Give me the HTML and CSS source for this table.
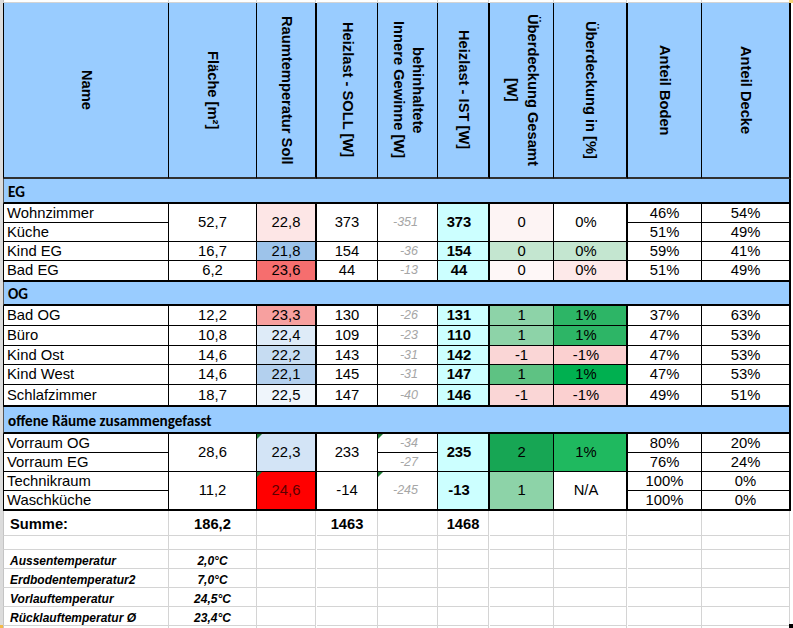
FILE: index.html
```html
<!DOCTYPE html>
<html lang="de">
<head>
<meta charset="utf-8">
<title>Heizlast</title>
<link rel="stylesheet" href="styles.css">
</head>
<body>
<div class="page">
  <div class="rowhead"></div>
  <div class="sheet">
    <!-- top strip (previous row) -->
    <div class="x x1"></div><div class="x"></div><div class="x xw"></div><div class="x"></div><div class="x"></div><div class="x xw"></div><div class="x"></div><div class="x xw"></div><div class="x"></div><div class="x xw"></div>

    <!-- header -->
    <div class="c h n"><span class="v">Name</span></div>
    <div class="c h f"><span class="v">Fläche [m²]</span></div>
    <div class="c h t"><span class="v">Raumtemperatur Soll</span></div>
    <div class="c h s"><span class="v">Heizlast - SOLL [W]</span></div>
    <div class="c h g"><span class="v">behinhaltete<br>Innere Gewinne [W]</span></div>
    <div class="c h i"><span class="v">Heizlast - IST [W]</span></div>
    <div class="c h u"><span class="v v2">Überdeckung Gesamt<br>[W]</span></div>
    <div class="c h p"><span class="v">Überdeckung in [%]</span></div>
    <div class="c h b"><span class="v">Anteil Boden</span></div>
    <div class="c h d"><span class="v">Anteil Decke</span></div>

    <div class="band">EG</div>

    <div class="c n">Wohnzimmer</div>
    <div class="c f r2">52,7</div>
    <div class="c t r2 bg-t1">22,8</div>
    <div class="c s r2">373</div>
    <div class="c g r2">-351</div>
    <div class="c i r2">373</div>
    <div class="c u r2 bg-u0a">0</div>
    <div class="c p r2">0%</div>
    <div class="c b">46%</div>
    <div class="c d">54%</div>

    <div class="c n">Küche</div>
    <div class="c b">51%</div>
    <div class="c d">49%</div>

    <div class="c n">Kind EG</div>
    <div class="c f">16,7</div>
    <div class="c t bg-t2">21,8</div>
    <div class="c s">154</div>
    <div class="c g">-36</div>
    <div class="c i">154</div>
    <div class="c u bg-g0">0</div>
    <div class="c p bg-g0">0%</div>
    <div class="c b">59%</div>
    <div class="c d">41%</div>

    <div class="c n tb">Bad EG</div>
    <div class="c f tb">6,2</div>
    <div class="c t tb bg-t3">23,6</div>
    <div class="c s tb">44</div>
    <div class="c g tb">-13</div>
    <div class="c i tb">44</div>
    <div class="c u tb bg-u0b">0</div>
    <div class="c p tb bg-p0b">0%</div>
    <div class="c b tb">51%</div>
    <div class="c d tb">49%</div>

    <div class="band">OG</div>

    <div class="c n">Bad OG</div>
    <div class="c f">12,2</div>
    <div class="c t bg-t4">23,3</div>
    <div class="c s">130</div>
    <div class="c g">-26</div>
    <div class="c i">131</div>
    <div class="c u bg-g1">1</div>
    <div class="c p bg-g3">1%</div>
    <div class="c b">37%</div>
    <div class="c d">63%</div>

    <div class="c n">Büro</div>
    <div class="c f">10,8</div>
    <div class="c t bg-t5">22,4</div>
    <div class="c s">109</div>
    <div class="c g">-23</div>
    <div class="c i">110</div>
    <div class="c u bg-g1">1</div>
    <div class="c p bg-g3">1%</div>
    <div class="c b">47%</div>
    <div class="c d">53%</div>

    <div class="c n">Kind Ost</div>
    <div class="c f">14,6</div>
    <div class="c t bg-t6">22,2</div>
    <div class="c s">143</div>
    <div class="c g">-31</div>
    <div class="c i">142</div>
    <div class="c u bg-r1">-1</div>
    <div class="c p bg-r2">-1%</div>
    <div class="c b">47%</div>
    <div class="c d">53%</div>

    <div class="c n">Kind West</div>
    <div class="c f">14,6</div>
    <div class="c t bg-t7">22,1</div>
    <div class="c s">145</div>
    <div class="c g">-31</div>
    <div class="c i">147</div>
    <div class="c u bg-g2">1</div>
    <div class="c p bg-g4">1%</div>
    <div class="c b">47%</div>
    <div class="c d">53%</div>

    <div class="c n tb">Schlafzimmer</div>
    <div class="c f tb">18,7</div>
    <div class="c t tb bg-t8">22,5</div>
    <div class="c s tb">147</div>
    <div class="c g tb">-40</div>
    <div class="c i tb">146</div>
    <div class="c u tb bg-r1">-1</div>
    <div class="c p tb bg-r2">-1%</div>
    <div class="c b tb">49%</div>
    <div class="c d tb">51%</div>

    <div class="band band3">offene Räume zusammengefasst</div>

    <div class="c n">Vorraum OG</div>
    <div class="c f r2">28,6</div>
    <div class="c t r2 bg-t9 cm">22,3</div>
    <div class="c s r2">233</div>
    <div class="c g cm">-34</div>
    <div class="c i r2">235</div>
    <div class="c u r2 bg-g5">2</div>
    <div class="c p r2 bg-g6">1%</div>
    <div class="c b">80%</div>
    <div class="c d">20%</div>

    <div class="c n">Vorraum EG</div>
    <div class="c g">-27</div>
    <div class="c b">76%</div>
    <div class="c d">24%</div>

    <div class="c n">Technikraum</div>
    <div class="c f r2 tb">11,2</div>
    <div class="c t r2 tb bg-t10 cm">24,6</div>
    <div class="c s r2 tb">-14</div>
    <div class="c g r2 tb cm">-245</div>
    <div class="c i r2 tb">-13</div>
    <div class="c u r2 tb bg-g1">1</div>
    <div class="c p r2 tb">N/A</div>
    <div class="c b">100%</div>
    <div class="c d">0%</div>

    <div class="c n tb">Waschküche</div>
    <div class="c b tb">100%</div>
    <div class="c d tb">0%</div>

    <!-- Summe -->
    <div class="x x1 sum lft">Summe:</div>
    <div class="x sum">186,2</div>
    <div class="x xw"></div>
    <div class="x sum">1463</div>
    <div class="x"></div>
    <div class="x xw sum">1468</div>
    <div class="x"></div>
    <div class="x xw"></div>
    <div class="x"></div>
    <div class="x xw"></div>

    <!-- blank -->
    <div class="x x1"></div><div class="x"></div><div class="x xw"></div><div class="x"></div><div class="x"></div><div class="x xw"></div><div class="x"></div><div class="x xw"></div><div class="x"></div><div class="x xw"></div>

    <div class="x x1 lbl">Aussentemperatur</div>
    <div class="x val">2,0°C</div>
    <div class="x xw"></div><div class="x"></div><div class="x"></div><div class="x xw"></div><div class="x"></div><div class="x xw"></div><div class="x"></div><div class="x xw"></div>

    <div class="x x1 lbl">Erdbodentemperatur2</div>
    <div class="x val">7,0°C</div>
    <div class="x xw"></div><div class="x"></div><div class="x"></div><div class="x xw"></div><div class="x"></div><div class="x xw"></div><div class="x"></div><div class="x xw"></div>

    <div class="x x1 lbl">Vorlauftemperatur</div>
    <div class="x val">24,5°C</div>
    <div class="x xw"></div><div class="x"></div><div class="x"></div><div class="x xw"></div><div class="x"></div><div class="x xw"></div><div class="x"></div><div class="x xw"></div>

    <div class="x x1 lbl">Rücklauftemperatur Ø</div>
    <div class="x val">23,4°C</div>
    <div class="x xw"></div><div class="x"></div><div class="x"></div><div class="x xw"></div><div class="x"></div><div class="x xw"></div><div class="x"></div><div class="x xw"></div>

    <div class="x x1"></div><div class="x"></div><div class="x xw"></div><div class="x"></div><div class="x"></div><div class="x xw"></div><div class="x"></div><div class="x xw"></div><div class="x"></div><div class="x xw"></div>
  </div>
  <div class="handle"></div>
  <div class="rowmark"></div>
  <div class="colmark"></div>
</div>
</body>
</html>
```
FILE: styles.css
```css
* { box-sizing: border-box; margin: 0; padding: 0; }

html, body {
  width: 793px;
  height: 628px;
  overflow: hidden;
  background: #ffffff;
}

body {
  font-family: "Liberation Sans", Arial, sans-serif;
  color: #000;
}

.page {
  position: relative;
  display: flex;
  height: 628px;
}

.rowhead {
  flex: none;
  width: 3px;
  background: #dcdcdc;
}

.sheet {
  flex: none;
  display: grid;
  grid-template-columns: 166px 88px 60px 61px 60px 52px 64px 74px 74px 89px;
  grid-template-rows: 3px 176px 25px 19px 19px 19px 21px 24px 20px 20px 19px 20px 22px 27px 19px 19px 19px 20px 25px 14px 19px 19px 19px 19px 10px;
}

/* data cells */
.c {
  display: flex;
  align-items: center;
  justify-content: center;
  border-right: 1px solid #000;
  border-bottom: 1px solid #000;
  font-size: 14.8px;
  line-height: 17px;
  white-space: nowrap;
  overflow: hidden;
  position: relative;
}

.r2 { grid-row: span 2; }
.tb { border-bottom-width: 2px; }

.n {
  border-left: 1px solid #000;
  justify-content: flex-start;
  padding-left: 3px;
}
.t, .i, .p, .d { border-right-width: 2px; }

.g {
  justify-content: flex-end;
  padding-right: 19px;
  color: #a6a6a6;
  font-style: italic;
  font-size: 12.5px;
}

.i {
  background: #ccffff;
  font-weight: bold;
  padding-right: 8px;
}

.p { padding-right: 8px; }

/* header */
.h {
  background: #99ccff;
  border-bottom: 2px solid #303030;
  padding: 0;
  justify-content: center;
  color: #000;
  font-style: normal;
  font-size: 14.7px;
}
.h.n { padding-left: 0; justify-content: center; }
.v {
  writing-mode: vertical-rl;
  font-weight: bold;
  text-align: center;
  line-height: 19px;
  white-space: nowrap;
}
.v2 { line-height: 21px; }

/* section bands */
.band {
  grid-column: span 10;
  display: flex;
  align-items: center;
  padding: 2px 0 0 4px;
  background: #99ccff;
  border-left: 1px solid #555;
  border-right: 2px solid #000;
  border-bottom: 2px solid #000;
  font-family: Carlito, Calibri, "Open Sans", sans-serif;
  font-weight: bold;
  font-size: 15.2px;
  color: #000;
}

/* lower gridline area */
.x {
  display: flex;
  align-items: center;
  justify-content: center;
  border-right: 1px solid #d4d4d4;
  border-bottom: 1px solid #d4d4d4;
  white-space: nowrap;
  overflow: hidden;
  font-size: 14.7px;
}
.x1 { border-left: 1px solid #c4c4c4; }
.xw { margin-right: 1px; }
.sum { font-weight: bold; padding-top: 2px; }
.lft { justify-content: flex-start; padding-left: 6px; }
.lbl {
  justify-content: flex-start;
  padding-left: 6px;
  font-style: italic;
  font-weight: bold;
  font-size: 12px;
  padding-top: 3px;
}
.val {
  font-style: italic;
  font-weight: bold;
  font-size: 12px;
  padding-top: 3px;
}

/* conditional formatting colours */
.bg-t1 { background: #fde6e6; }
.bg-t2 { background: #9dc3ea; }
.bg-t3 { background: #f66e6e; }
.bg-t4 { background: #f7a09f; }
.bg-t5 { background: #deebf8; }
.bg-t6 { background: #c6dcf2; }
.bg-t7 { background: #b3d0ee; }
.bg-t8 { background: #eff5fb; }
.bg-t9 { background: #d3e4f6; }
.bg-t10 { background: #ff0000; color: #5c0000; }

.bg-u0a { background: #fdf4f4; }
.bg-u0b { background: #fef7f7; }
.bg-p0b { background: #fde9e9; }
.bg-g0 { background: #c4e6d0; }
.bg-g1 { background: #8dd3a8; }
.bg-g2 { background: #5ec283; }
.bg-g3 { background: #2db566; }
.bg-g4 { background: #00b050; }
.bg-g5 { background: #17a654; }
.bg-g6 { background: #1fb95f; }
.bg-r1 { background: #fad6d6; }
.bg-r2 { background: #fbd0d0; }

/* comment indicators */
.cm::before {
  content: "";
  position: absolute;
  left: 0;
  top: 0;
  border-top: 5px solid #1e7b34;
  border-right: 5px solid transparent;
}

/* excel selection marks */
.handle {
  position: absolute;
  left: 789px;
  top: 624px;
  width: 5px;
  height: 5px;
  background: #000;
}
.rowmark {
  position: absolute;
  left: 0;
  top: 625px;
  width: 3px;
  height: 3px;
  background: #f2b94a;
}
.colmark {
  position: absolute;
  left: 789px;
  top: 0;
  width: 4px;
  height: 3px;
  background: #f4d27a;
}
```
